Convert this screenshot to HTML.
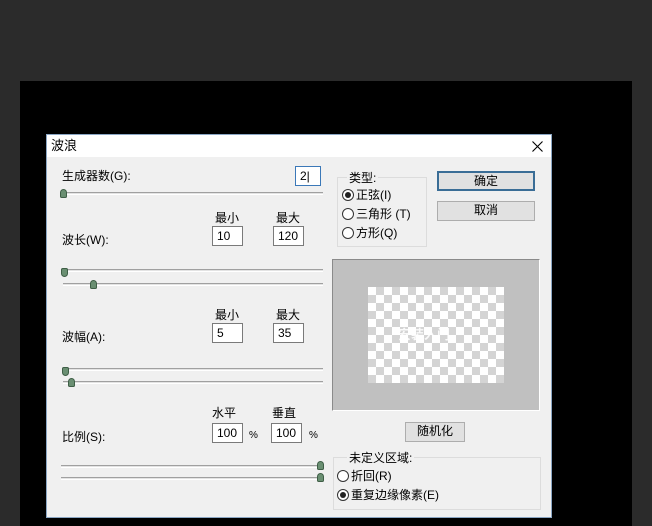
<!DOCTYPE html>
<html><head><meta charset="utf-8"><style>
*{margin:0;padding:0;box-sizing:border-box}
body{width:652px;height:526px;background:#2b2b2b;position:relative;overflow:hidden;font-family:"Liberation Sans","Noto Sans CJK SC","WenQuanYi Zen Hei",sans-serif;font-size:12px;color:#000}
.a{position:absolute}
.canvas{left:20px;top:81px;width:612px;height:445px;background:#000}
.dlg{left:46px;top:134px;width:506px;height:384px;background:#f0f0f0;border:1px solid #8aa6c4}
.title{left:0;top:0;width:504px;height:22px;background:#fff}
.t{position:absolute;white-space:nowrap;line-height:14px}
.inp{position:absolute;background:#fff;border:1px solid #7a7a7a;height:20px;padding:2px 0 0 4px;line-height:14px;font-size:12px}
.track{position:absolute;height:3px;border-top:1px solid #a0a0a0;border-bottom:1px solid #fff;background:#e3e3e3}
.th{position:absolute;width:7px;height:9px;background:#6a8f72;border:1px solid #3e5e46}
.dn{border-radius:2px 2px 4px 4px}
.up{border-radius:4px 4px 2px 2px}
.btn{position:absolute;background:#e1e1e1;border:1px solid #adadad;text-align:center;line-height:17px}
.grp{position:absolute;border:1px solid #dcdcdc}
.rad{position:absolute;width:12px;height:12px;border-radius:50%;border:1px solid #333;background:#fff}
.rad.on::after{content:"";position:absolute;left:2px;top:2px;width:6px;height:6px;border-radius:50%;background:#222}
.prev{left:285px;top:124px;width:208px;height:152px;background:#c0c0c0;border:1px solid #8a8a8a;border-right-color:#fff;border-bottom-color:#fff}
.chk{left:35px;top:27px;width:136px;height:96px;background-color:#fff;background-image:conic-gradient(#d4d4d4 25%,transparent 0 50%,#d4d4d4 0 75%,transparent 0);background-size:16px 16px}
</style></head><body>
<div class="a canvas"></div>
<div class="a dlg">
 <div class="a title"></div>
 <div class="t" style="left:4px;top:4px;font-size:13px">波浪</div>
 <svg class="a" style="left:485px;top:6px" width="11" height="11" viewBox="0 0 11 11"><path d="M0.5 0.5L10.5 10.5M10.5 0.5L0.5 10.5" stroke="#000" stroke-width="1.1"/></svg>

 <div class="t" style="left:15px;top:34px">生成器数(G):</div>
 <div class="inp" style="left:248px;top:31px;width:26px;border-color:#3b78b8">2|</div>
 <div class="track" style="left:14px;top:57px;width:262px"></div>
 <div class="th up" style="left:13px;top:54px"></div>

 <div class="t" style="left:168px;top:76px">最小</div>
 <div class="t" style="left:229px;top:76px">最大</div>
 <div class="t" style="left:15px;top:98px">波长(W):</div>
 <div class="inp" style="left:165px;top:91px;width:31px">10</div>
 <div class="inp" style="left:226px;top:91px;width:31px">120</div>
 <div class="track" style="left:16px;top:134px;width:260px"></div>
 <div class="th dn" style="left:14px;top:133px"></div>
 <div class="track" style="left:16px;top:148px;width:260px"></div>
 <div class="th up" style="left:43px;top:145px"></div>

 <div class="t" style="left:168px;top:173px">最小</div>
 <div class="t" style="left:229px;top:173px">最大</div>
 <div class="t" style="left:15px;top:195px">波幅(A):</div>
 <div class="inp" style="left:165px;top:188px;width:31px">5</div>
 <div class="inp" style="left:226px;top:188px;width:31px">35</div>
 <div class="track" style="left:16px;top:233px;width:260px"></div>
 <div class="th dn" style="left:15px;top:232px"></div>
 <div class="track" style="left:16px;top:246px;width:260px"></div>
 <div class="th up" style="left:21px;top:243px"></div>

 <div class="t" style="left:165px;top:271px">水平</div>
 <div class="t" style="left:225px;top:271px">垂直</div>
 <div class="t" style="left:15px;top:295px">比例(S):</div>
 <div class="inp" style="left:165px;top:288px;width:31px">100</div>
 <div class="t" style="left:202px;top:294px;font-size:10px">%</div>
 <div class="inp" style="left:224px;top:288px;width:31px">100</div>
 <div class="t" style="left:262px;top:294px;font-size:10px">%</div>
 <div class="track" style="left:14px;top:330px;width:262px"></div>
 <div class="th up" style="left:270px;top:326px"></div>
 <div class="track" style="left:14px;top:342px;width:262px"></div>
 <div class="th up" style="left:270px;top:338px"></div>

 <div class="grp" style="left:290px;top:42px;width:90px;height:70px"></div>
 <div class="t" style="left:300px;top:36px;background:#f0f0f0;padding:0 2px">类型:</div>
 <div class="rad on" style="left:295px;top:54px"></div><div class="t" style="left:309px;top:53px">正弦(I)</div>
 <div class="rad" style="left:295px;top:73px"></div><div class="t" style="left:309px;top:72px">三角形 (T)</div>
 <div class="rad" style="left:295px;top:92px"></div><div class="t" style="left:309px;top:91px">方形(Q)</div>

 <div class="btn" style="left:390px;top:36px;width:98px;height:20px;border:2px solid #3a6d96;line-height:16px">确定</div>
 <div class="btn" style="left:390px;top:66px;width:98px;height:20px">取消</div>

 <div class="a prev"><div class="a chk"></div><div class="t" style="left:65px;top:68px;color:#fff;font-weight:bold;font-size:13px;opacity:.9">安装入门</div></div>

 <div class="btn" style="left:358px;top:287px;width:60px;height:20px">随机化</div>

 <div class="grp" style="left:286px;top:322px;width:208px;height:53px"></div>
 <div class="t" style="left:300px;top:316px;background:#f0f0f0;padding:0 2px">未定义区域:</div>
 <div class="rad" style="left:290px;top:335px"></div><div class="t" style="left:304px;top:334px">折回(R)</div>
 <div class="rad on" style="left:290px;top:354px"></div><div class="t" style="left:304px;top:353px">重复边缘像素(E)</div>
</div>
</body></html>
